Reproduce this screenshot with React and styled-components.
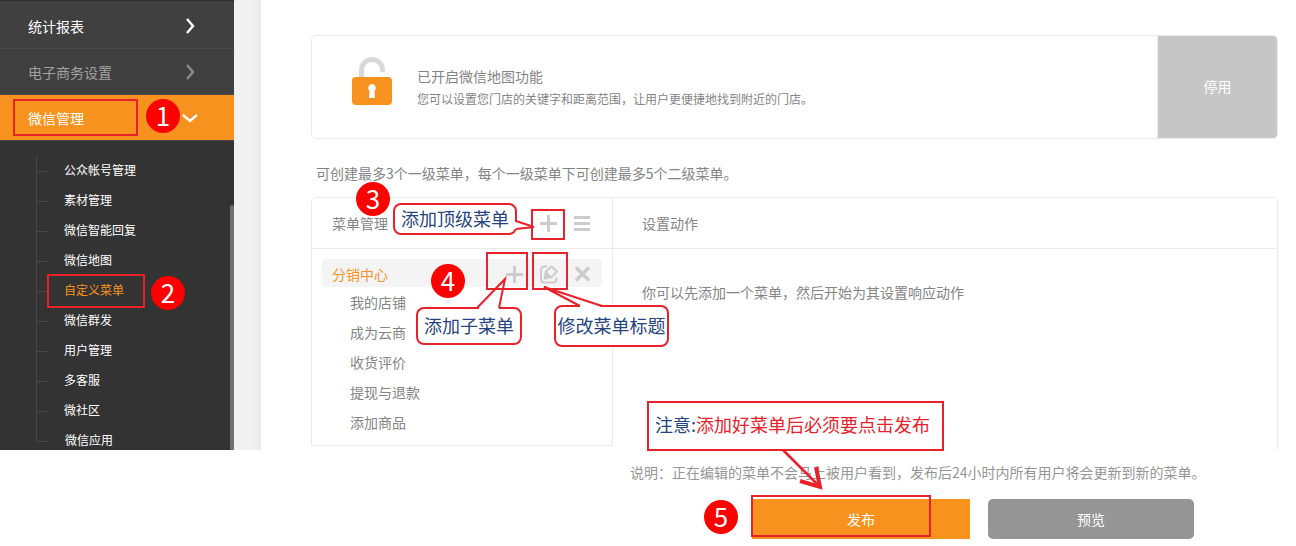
import React from "react";
import styled, { createGlobalStyle } from "styled-components";

const RED = "#e8212b";
const ORANGE = "#f8921e";
const LINE = "#ebebeb";

const GlobalStyle = createGlobalStyle`
  * {
    box-sizing: border-box;
  }
  body {
    margin: 0;
    background: #fff;
    color: #848484;
    font-family: "Noto Sans CJK SC", sans-serif;
    font-size: 14px;
    line-height: 20px;
  }
  h2, p, ul {
    margin: 0;
    padding: 0;
    font-size: inherit;
    font-weight: normal;
  }
  ul {
    list-style: none;
  }
  a {
    color: inherit;
    text-decoration: none;
  }
  button {
    padding: 0;
    border: 0;
    font: inherit;
    cursor: pointer;
  }
`;

const Page = styled.div`
  display: flex;
  align-items: flex-start;
`;

const Sidebar = styled.nav`
  position: relative;
  flex: none;
  width: 234px;
  padding-top: 2px;
  background: #333;
`;

const Gutter = styled.div`
  flex: none;
  align-self: flex-start;
  width: 27px;
  height: 450px;
  background: linear-gradient(to right, #f1f1f1 70%, #eaeaea);
`;

const ScrollThumb = styled.span`
  position: absolute;
  top: 205px;
  right: 0;
  bottom: 0;
  width: 4px;
  border-radius: 2px 2px 0 0;
  background: #706e6e;
`;

const NavItem = styled.a`
  position: relative;
  display: flex;
  align-items: center;
  justify-content: space-between;
  height: 46px;
  padding: 0 36px 0 28px;
  border-top: 1px solid #4b4b4b;
  background: ${(props) => (props.$active ? ORANGE : "#404040")};
  color: ${(props) => (props.$muted ? "#a0a0a0" : "#fff")};

  svg {
    opacity: ${(props) => (props.$muted ? 0.4 : 1)};
  }
`;

const SubMenu = styled.ul`
  padding: 14px 0 0 36px;
  border-top: 1px solid #4b4b4b;
  color: #fff;
  font-size: 12px;
`;

const SubItem = styled.li`
  position: relative;
  display: flex;
  gap: 16px;
  height: 30px;
  line-height: 30px;
  color: ${(props) => (props.$active ? ORANGE : "#fff")};

  &::before {
    content: "";
    width: 12px;
    height: 16px;
    border-bottom: 1px solid #484848;
  }
  &:not(:last-child) {
    border-left: 1px solid #484848;
  }
  &:not(:last-child)::before {
    width: 11px;
  }
  &:last-child {
    height: 25px;
    overflow: hidden;
  }
  &:last-child::before {
    border-left: 1px solid #484848;
  }
`;

const Main = styled.main`
  flex: 1;
  min-width: 0;
  padding: 35px 18px 7px 50px;
`;

const StatusCard = styled.section`
  display: flex;
  border: 1px solid ${LINE};
  border-radius: 5px;
  overflow: hidden;
`;

const StatusBody = styled.div`
  display: flex;
  flex: 1;
  gap: 25px;
  height: 102px;
  padding: 20px 40px;
`;

const StatusText = styled.div`
  padding-top: 10px;

  p {
    padding-top: 3px;
    font-size: 12px;
  }
`;

const DisableButton = styled.button`
  width: 120px;
  padding-bottom: 2px;
  border-left: 1px solid ${LINE};
  background: #c6c6c6;
  color: #fff;
`;

const Notice = styled.p`
  padding: 24px 5px 14px;
`;

const Panels = styled.div`
  display: grid;
  grid-template-columns: 302px 1fr;
  align-items: start;
`;

const MenuPanel = styled.section`
  border: 1px solid ${LINE};
  border-radius: 5px 0 0 0;
`;

const ActionPanel = styled.section`
  min-height: 253px;
  border: 1px solid ${LINE};
  border-width: 1px 1px 0 0;
  border-radius: 0 5px 0 0;
`;

const PanelHeader = styled.header`
  position: relative;
  display: flex;
  align-items: center;
  justify-content: space-between;
  height: 51px;
  padding: 0 21px 0 ${(props) => (props.$wide ? "29px" : "20px")};
  border-bottom: 1px solid ${LINE};
`;

const MenuBody = styled.div`
  padding: 10px 10px 7px;
`;

const MenuRow = styled.div`
  position: relative;
  display: flex;
  align-items: center;
  justify-content: space-between;
  height: 28px;
  padding: 2px 11px 0 10px;
  border-radius: 4px;
  background: #f4f4f4;
  color: ${ORANGE};
`;

const Tools = styled.div`
  display: flex;
  gap: 16px;
`;

const IconButton = styled.button`
  display: flex;
  width: 18px;
  height: 18px;
  background: none;
  color: #ccc;
`;

const SubRows = styled.ul`
  padding: 0 0 1px 28px;

  li {
    line-height: 30px;
  }
`;

const ActionMessage = styled.p`
  padding: 33px 29px;
`;

const Hint = styled.p`
  padding: 12px 0 17px 319px;
  color: #959595;
`;

const Actions = styled.div`
  position: relative;
  display: flex;
  gap: 18px;
  padding-left: 441px;
`;

const ActionButton = styled.button`
  position: relative;
  width: ${(props) => (props.$primary ? "218px" : "206px")};
  height: 40px;
  border-radius: ${(props) => (props.$primary ? "0" : "5px")};
  background: ${(props) => (props.$primary ? ORANGE : "#959595")};
  color: #fff;
`;

// Tutorial marks drawn over the page
const Frame = styled.span`
  position: absolute;
  z-index: 1;
  top: ${(props) => props.$y}px;
  left: ${(props) => props.$x}px;
  width: ${(props) => props.$w}px;
  height: ${(props) => props.$h}px;
  border: 2px solid ${RED};
  pointer-events: none;
`;

const Badge = styled.span`
  position: absolute;
  z-index: 3;
  top: ${(props) => props.$y}px;
  left: ${(props) => props.$x}px;
  width: 34px;
  height: 34px;
  border-radius: 50%;
  background: #fe0000;
  color: #fff;
  font-size: 26px;
  line-height: 32px;
  text-align: center;
`;

const Callout = styled.span`
  position: absolute;
  z-index: 2;
  top: ${(props) => props.$y}px;
  left: ${(props) => props.$x}px;
  display: flex;
  align-items: center;
  justify-content: ${(props) => (props.$square ? "flex-start" : "center")};
  width: ${(props) => props.$w}px;
  height: ${(props) => props.$h}px;
  padding: ${(props) => (props.$square ? "0 6px 4px" : "0 0 2px")};
  border: 2px solid ${RED};
  border-radius: ${(props) => (props.$square ? "0" : "8px")};
  background: #fff;
  color: #26457f;
  font-size: 18px;
  line-height: 26px;
  white-space: nowrap;

  em {
    color: ${RED};
    font-style: normal;
  }
`;

const Tail = styled.svg`
  position: absolute;
  top: ${(props) => props.$y}px;
  left: ${(props) => props.$x}px;
  overflow: visible;
  fill: none;
  stroke: ${RED};
  stroke-width: 2;
`;

const navItems = [
  { label: "统计报表" },
  { label: "电子商务设置", muted: true },
  { label: "微信管理", active: true },
];

const subItems = [
  "公众帐号管理",
  "素材管理",
  "微信智能回复",
  "微信地图",
  "自定义菜单",
  "微信群发",
  "用户管理",
  "多客服",
  "微社区",
  "微信应用",
];

const menuChildren = ["我的店铺", "成为云商", "收货评价", "提现与退款", "添加商品"];

function Chevron({ down }) {
  return (
    <svg width="16" height="16" viewBox="0 0 16 16" fill="none" stroke="#fff" strokeWidth="2.4">
      <path d={down ? "M1 5l7 6 7-6" : "M5 1l6 7-6 7"} />
    </svg>
  );
}

function PlusIcon() {
  return (
    <svg width="18" height="18" stroke="currentColor" strokeWidth="3">
      <path d="M9.500 1v17M1 9.500h17" />
    </svg>
  );
}

function ListIcon() {
  return (
    <svg width="18" height="18" stroke="currentColor" strokeWidth="3">
      <path d="M1 3.500h16M1 9.500h16M1 15.500h16" />
    </svg>
  );
}

function EditIcon() {
  return (
    <svg width="18" height="18" overflow="visible" fill="none" stroke="currentColor" strokeWidth="2">
      <path d="M8 1.500H5.500Q2 1.500 2 5v9q0 3.500 3.500 3.500H14q3.500 0 3.500-3.500v-1.500" />
      <path d="M5.500 13.500l1.500-7L12.500 1.500 18 6.500 12.500 12z" strokeLinejoin="round" />
      <path d="M5 14l2-8 6 6z" fill="currentColor" stroke="none" />
    </svg>
  );
}

function CloseIcon() {
  return (
    <svg width="18" height="18" stroke="currentColor" strokeWidth="3.500">
      <path d="M3 2.500l13 13M16 2.500L3 15.500" />
    </svg>
  );
}

function LockIcon() {
  return (
    <svg width="40" height="50" viewBox="0 0 40 50">
      <path
        d="M9.500 24V14a10.500 10.500 0 0 1 21 0"
        fill="none"
        stroke="#d8d8d8"
        strokeWidth="5"
        strokeLinecap="round"
      />
      <rect y="21" width="40" height="28" rx="4" fill={ORANGE} />
      <path d="M20 28a4 4 0 0 1 2.500 7l.5 7h-6l.5-7A4 4 0 0 1 20 28z" fill="#fff" />
    </svg>
  );
}

function SideNav() {
  return (
    <Sidebar>
      {navItems.map((item) => (
        <NavItem key={item.label} href="#" $active={item.active} $muted={item.muted}>
          {item.label}
          <Chevron down={item.active} />
          {item.active && (
            <>
              <Frame $x={13} $y={4} $w={125} $h={37} />
              <Badge $x={146} $y={4}>1</Badge>
            </>
          )}
        </NavItem>
      ))}
      <SubMenu>
        {subItems.map((label) => {
          const active = label === "自定义菜单";
          return (
            <SubItem key={label} $active={active}>
              <a href="#">{label}</a>
              {active && (
                <>
                  <Frame $x={10} $y={-1} $w={98} $h={34} />
                  <Badge $x={114} $y={1}>2</Badge>
                </>
              )}
            </SubItem>
          );
        })}
      </SubMenu>
      <ScrollThumb />
    </Sidebar>
  );
}

function MenuManager() {
  return (
    <MenuPanel>
      <PanelHeader>
        <h2>菜单管理</h2>
        <Tools>
          <IconButton aria-label="添加顶级菜单"><PlusIcon /></IconButton>
          <IconButton aria-label="菜单管理"><ListIcon /></IconButton>
        </Tools>
        <Frame $x={219} $y={11} $w={34} $h={31} />
        <Badge $x={44} $y={-16}>3</Badge>
        <Callout $x={81} $y={5} $w={124} $h={32}>
          添加顶级菜单
          <Tail $x={118} $y={14} width="24" height="14">
            <path d="M3 3v7" stroke="#fff" strokeWidth="4" />
            <path d="M3 2l18 6-18 2" />
          </Tail>
        </Callout>
      </PanelHeader>
      <MenuBody>
        <MenuRow>
          分销中心
          <Tools>
            <IconButton aria-label="添加子菜单"><PlusIcon /></IconButton>
            <IconButton aria-label="修改菜单标题"><EditIcon /></IconButton>
            <IconButton aria-label="删除"><CloseIcon /></IconButton>
          </Tools>
          <Frame $x={164} $y={-7} $w={42} $h={38} />
          <Frame $x={210} $y={-7} $w={36} $h={38} />
          <Badge $x={109} $y={5}>4</Badge>
          <Callout $x={94} $y={48} $w={106} $h={38}>
            添加子菜单
            <Tail $x={58} $y={-32} width="32" height="34">
              <path d="M3 31h20" stroke="#fff" strokeWidth="4" />
              <path d="M1 31L29 2l-6 29" />
            </Tail>
          </Callout>
          <Callout $x={232} $y={46} $w={115} $h={42}>
            修改菜单标题
            <Tail $x={-14} $y={-22} width="64" height="22">
              <path d="M38 21h20" stroke="#fff" strokeWidth="4" />
              <path d="M38 21L2 2l58 19" />
            </Tail>
          </Callout>
        </MenuRow>
        <SubRows>
          {menuChildren.map((label) => (
            <li key={label}>{label}</li>
          ))}
        </SubRows>
      </MenuBody>
    </MenuPanel>
  );
}

function PublishBar() {
  return (
    <Actions>
      <ActionButton $primary>
        发布
        <Frame $x={-1} $y={-4} $w={180} $h={42} />
      </ActionButton>
      <ActionButton>预览</ActionButton>
      <Badge $x={393} $y={1}>5</Badge>
      <Callout $square $x={336} $y={-98} $w={297} $h={50}>
        注意:<em>添加好菜单后必须要点击发布</em>
        <Tail $x={134} $y={47} width="42" height="42">
          <path d="M0 0l36 36" strokeWidth="2.500" />
          <path d="M33 17l4 20-20-6" strokeWidth="4" />
        </Tail>
      </Callout>
    </Actions>
  );
}

export default function App() {
  return (
    <>
      <GlobalStyle />
      <Page>
        <SideNav />
        <Gutter />
        <Main>
          <StatusCard>
            <StatusBody>
              <LockIcon />
              <StatusText>
                <h2>已开启微信地图功能</h2>
                <p>您可以设置您门店的关键字和距离范围，让用户更便捷地找到附近的门店。</p>
              </StatusText>
            </StatusBody>
            <DisableButton>停用</DisableButton>
          </StatusCard>
          <Notice>可创建最多3个一级菜单，每个一级菜单下可创建最多5个二级菜单。</Notice>
          <Panels>
            <MenuManager />
            <ActionPanel>
              <PanelHeader $wide>
                <h2>设置动作</h2>
              </PanelHeader>
              <ActionMessage>你可以先添加一个菜单，然后开始为其设置响应动作</ActionMessage>
            </ActionPanel>
          </Panels>
          <Hint>说明：正在编辑的菜单不会马上被用户看到，发布后24小时内所有用户将会更新到新的菜单。</Hint>
          <PublishBar />
        </Main>
      </Page>
    </>
  );
}
